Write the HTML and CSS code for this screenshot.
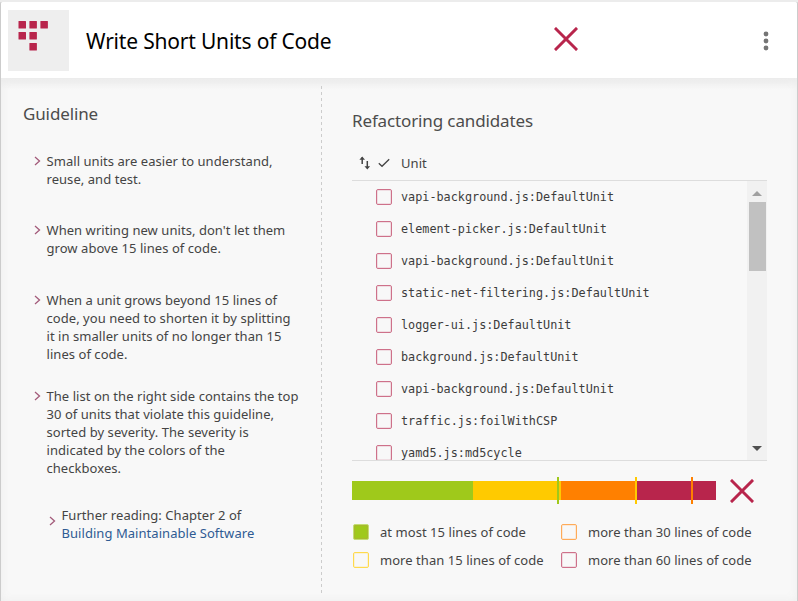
FILE: index.html
```html
<!DOCTYPE html>
<html lang="en">
<head>
<meta charset="utf-8">
<title>Write Short Units of Code</title>
<link rel="stylesheet" href="styles.css">
</head>
<body>
<main class="card">
  <header class="header">
    <div class="tile">
      <svg width="61" height="61" viewBox="0 0 61 61"><g fill="#b8254c"><rect x="10.5" y="11" width="7.5" height="7.5" rx=".6"/><rect x="21.4" y="11" width="7.5" height="7.5" rx=".6"/><rect x="32.4" y="11" width="7.5" height="7.5" rx=".6"/><rect x="10.5" y="22" width="7.5" height="7.5" rx=".6"/><rect x="21.4" y="22" width="7.5" height="7.5" rx=".6"/><rect x="21.4" y="33" width="7.5" height="7.5" rx=".6"/></g></svg>
    </div>
    <h1>Write Short Units of Code</h1>
    <svg class="cross" width="24" height="24" viewBox="0 0 24 24"><path d="M2 2 22 22M22 2 2 22"/></svg>
    <svg class="dots" width="6" height="20" viewBox="0 0 6 20"><circle cx="3" cy="3" r="2.4"/><circle cx="3" cy="10" r="2.4"/><circle cx="3" cy="17" r="2.4"/></svg>
  </header>
  <div class="body">
    <section class="guide">
      <h2>Guideline</h2>
      <ul class="rules">
        <li><svg class="chev" viewBox="0 0 7 10"><path d="M1 1l4.5 4L1 9"/></svg><p>Small units are easier to understand,<br>reuse, and test.</p></li>
        <li><svg class="chev" viewBox="0 0 7 10"><path d="M1 1l4.5 4L1 9"/></svg><p>When writing new units, don't let them<br>grow above 15 lines of code.</p></li>
        <li><svg class="chev" viewBox="0 0 7 10"><path d="M1 1l4.5 4L1 9"/></svg><p>When a unit grows beyond 15 lines of<br>code, you need to shorten it by splitting<br>it in smaller units of no longer than 15<br>lines of code.</p></li>
        <li><svg class="chev" viewBox="0 0 7 10"><path d="M1 1l4.5 4L1 9"/></svg><p>The list on the right side contains the top<br>30 of units that violate this guideline,<br>sorted by severity. The severity is<br>indicated by the colors of the<br>checkboxes.</p></li>
        <li class="reading"><svg class="chev" viewBox="0 0 7 10"><path d="M1 1l4.5 4L1 9"/></svg><p>Further reading: Chapter 2 of<br><a>Building Maintainable Software</a></p></li>
      </ul>
    </section>
    <svg class="divider" width="1" height="509" viewBox="0 0 1 509"><path d="M.5 0V509"/></svg>
    <section class="candidates">
      <h2>Refactoring candidates</h2>
      <div class="thead">
        <svg width="12" height="14" viewBox="0 0 12 14"><path d="M3.2 1.500V8M8.300 5V12" fill="none" stroke="#444" stroke-width="1.500"/><path d="M.4 3.800 3.200.5 6 3.800zM5.500 10.200 8.300 13.500 11.100 10.200z" fill="#444"/></svg>
        <svg class="tick" width="12" height="10" viewBox="0 0 12 10"><path d="M.8 5.200 4 8.300 11.200 1.200"/></svg>
        <span>Unit</span>
      </div>
      <div class="listbox">
        <ul class="list">
          <li><i class="box"></i>vapi-background.js:DefaultUnit</li>
          <li><i class="box"></i>element-picker.js:DefaultUnit</li>
          <li><i class="box"></i>vapi-background.js:DefaultUnit</li>
          <li><i class="box"></i>static-net-filtering.js:DefaultUnit</li>
          <li><i class="box"></i>logger-ui.js:DefaultUnit</li>
          <li><i class="box"></i>background.js:DefaultUnit</li>
          <li><i class="box"></i>vapi-background.js:DefaultUnit</li>
          <li><i class="box"></i>traffic.js:foilWithCSP</li>
          <li><i class="box"></i>yamd5.js:md5cycle</li>
        </ul>
        <div class="scroll">
          <svg width="10" height="5" viewBox="0 0 10 5"><path d="M0 5 5 0 10 5z" fill="#a0a0a0"/></svg>
          <div class="thumb"></div>
          <svg class="down" width="10" height="5" viewBox="0 0 10 5"><path d="M0 0H10L5 5z" fill="#505050"/></svg>
        </div>
      </div>
      <div class="result">
        <div class="bar">
          <div class="seg green"></div><div class="seg yellow"></div><div class="seg orange"></div><div class="seg red"></div>
          <b class="mark m1"></b><b class="mark m2"></b><b class="mark m3"></b>
        </div>
        <svg class="cross" width="24" height="24" viewBox="0 0 24 24"><path d="M2 2 22 22M22 2 2 22"/></svg>
      </div>
      <div class="legend">
        <div><i class="box c-green"></i>at most 15 lines of code</div>
        <div><i class="box c-orange"></i>more than 30 lines of code</div>
        <div><i class="box c-yellow"></i>more than 15 lines of code</div>
        <div><i class="box"></i>more than 60 lines of code</div>
      </div>
    </section>
  </div>
</main>
</body>
</html>
```
FILE: styles.css
```css
* { box-sizing: border-box; margin: 0; padding: 0; }
body { width: 798px; height: 601px; overflow: hidden; background: #ececec; padding: 2px 1px 0; font: 13px/18px "Noto Sans", sans-serif; color: #444; letter-spacing: .05px; white-space: nowrap; }
ul { list-style: none; }
svg { display: block; flex: none; }
.card { height: 599px; background: #f8f8f8; border-radius: 2px 2px 0 0; box-shadow: 0 0 0 1px #ccc; overflow: hidden; clip-path: inset(0 -1px 0 -1px); }
.header { height: 76px; background: #fff; display: flex; align-items: center; padding-left: 7px; }
.tile { width: 61px; height: 61px; background: #eee; margin-top: 1px; }
h1 { font-size: 21px; line-height: 28px; font-weight: 400; color: #000; margin: 2px 0 0 17px; width: 468px; letter-spacing: -.19px; }
.cross { fill: none; stroke: #b8254c; stroke-width: 3; stroke-linecap: square; }
.header .cross { margin-top: -2px; }
.dots { fill: #757575; margin: 2px 0 0 184.5px; }
.body { height: 523px; display: flex; background: linear-gradient(#ebebeb, #f8f8f8 12px); box-shadow: inset 0 0 10px #eee; }
.guide { width: 320px; padding: 24px 0 0 22px; }
h2 { font-size: 17px; line-height: 24px; font-weight: 400; color: #4c4c4c; letter-spacing: -.13px; }
.rules { padding: 26px 0 0 11px; }
.rules li { display: flex; margin-bottom: 33px; }
.rules li:nth-child(2) { margin-bottom: 34px; }
.rules li:nth-child(3) { margin-bottom: 24px; }
.rules li:nth-child(4) { margin-bottom: 29px; }
.rules .reading { margin-left: 15px; }
.chev { width: 7px; height: 10px; margin: 4px 5.5px 0 0; fill: none; stroke: #a35b7a; stroke-width: 1.3; }
.reading .chev { margin-top: 10px; }
a { color: #2f5b93; }
.divider { margin-top: 8px; stroke: #ccc; stroke-dasharray: 3 3; }
.candidates { width: 416px; margin-left: 30px; padding-top: 31px; }
.thead { display: flex; align-items: center; height: 35px; margin-top: 12px; padding: 1px 0 0 7px; }
.tick { margin-left: 7px; fill: none; stroke: #444; stroke-width: 1.3; }
.thead span { margin-left: 11px; }
.listbox { width: 415px; height: 281px; border-top: 1px solid #ddd; border-bottom: 1px solid #ddd; display: flex; overflow: hidden; }
.list { flex: 1; }
.list li { height: 32px; display: flex; align-items: center; padding-left: 24px; font: 11.8px/18px "DejaVu Sans Mono", monospace; letter-spacing: 0; color: #3c3c3c; }
.box { flex: none; width: 16px; height: 16px; border: 1px solid #ce718a; outline: 1px solid #ce718a30; outline-offset: -2px; border-radius: 2px; margin-right: 9px; }
.scroll { width: 20px; background: #f1f1f1; padding-top: 10px; display: flex; flex-direction: column; align-items: center; }
.thumb { width: 17px; height: 69px; margin-top: 6px; background: #c1c1c1; flex: none; }
.down { margin: auto 0 9px; }
.result { display: flex; align-items: center; margin-top: 17px; height: 25px; }
.bar { position: relative; display: flex; width: 364px; height: 19px; margin-right: 14px; }
.green { width: 121px; background: #9fc91b; }
.yellow { width: 88px; background: #ffca00; }
.orange { width: 76px; background: #ff8000; }
.red { width: 79px; background: #b8254c; }
.mark { position: absolute; top: -4px; width: 2px; height: 27px; }
.m1 { left: 205px; background: #9fc91b; }
.m2 { left: 283px; background: #ffca00; }
.m3 { left: 339px; background: #ff8000; }
.legend { display: grid; grid-template-columns: 208px 208px; grid-auto-rows: 28px; margin-top: 15px; padding-left: 1px; }
.legend div { display: flex; align-items: center; }
.legend .box { margin-right: 11px; }
.legend .c-green { border-color: #c3df73; background: #9fc91b; }
.legend .c-yellow { border-color: #ffda4d; outline-color: #ffda4d30; }
.legend .c-orange { border-color: #ffab58; outline-color: #ffab5830; }
```
